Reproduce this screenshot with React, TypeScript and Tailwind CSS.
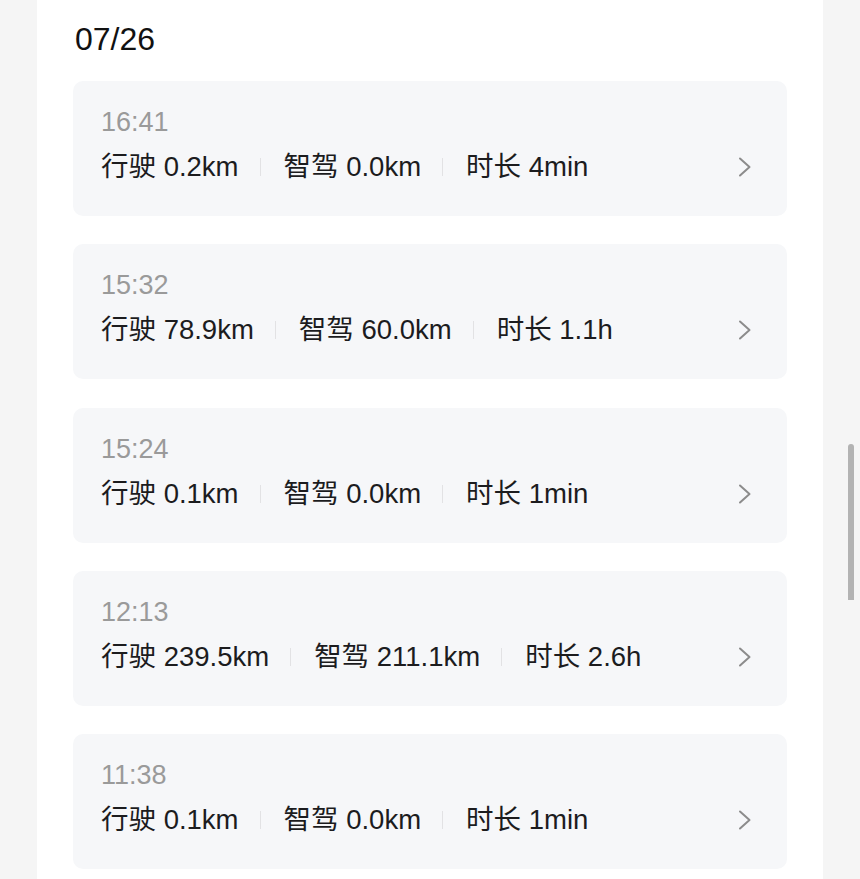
const trips = [
  { time: "16:41", drive: "0.2km", smart: "0.0km", duration: "4min" },
  { time: "15:32", drive: "78.9km", smart: "60.0km", duration: "1.1h" },
  { time: "15:24", drive: "0.1km", smart: "0.0km", duration: "1min" },
  { time: "12:13", drive: "239.5km", smart: "211.1km", duration: "2.6h" },
  { time: "11:38", drive: "0.1km", smart: "0.0km", duration: "1min" },
];

const font = { fontFamily: '"Liberation Sans", "Noto Sans CJK SC", sans-serif' };

const Divider = () => <div className="ml-[21px] mr-[23px] h-[18px] w-px bg-[#e2e2e4]" />;

const Chevron = () => (
  <svg width="14" height="20" viewBox="0 0 14 20" fill="none">
    <polyline points="2,1.5 11.5,10 2,18.5" stroke="#8c8c8c" strokeWidth="2" strokeLinecap="round" strokeLinejoin="round" />
  </svg>
);

type Trip = (typeof trips)[number];

const TripCard = ({ time, drive, smart, duration }: Trip) => {
  return (
    <div className="flex h-[135px] flex-col rounded-[10px] bg-[#f6f7f9] pl-[28px] pr-[35px] pt-[25px]">
      <div className="text-[27px] leading-[32px] text-[#9a9a9a]">{time}</div>
      <div className="mt-[11px] flex h-[36px] items-center text-[27.5px] leading-[36px] text-[#1c1c1e]">
        <span>行驶 {drive}</span>
        <Divider />
        <span>智驾 {smart}</span>
        <Divider />
        <span>时长 {duration}</span>
        <div className="ml-auto flex items-center">
          <Chevron />
        </div>
      </div>
    </div>
  );
};

export default function App() {
  return (
    <div className="flex h-[879px] w-[860px] overflow-hidden bg-[#f5f5f5]" style={font}>
      <div className="ml-[37px] flex w-[786px] flex-col bg-white px-[36px]">
        <div className="pl-[2px] pt-[19px] text-[32px] leading-[40px] text-[#111]">07/26</div>
        <div className="mt-[22px] flex flex-col gap-[28.25px]">
          {trips.map((t) => (
            <TripCard key={t.time} {...t} />
          ))}
        </div>
      </div>
      <div className="flex flex-1 flex-col pt-[444px]">
        <div className="ml-[25px] h-[156px] w-[6px] rounded-t-[3px] bg-[#b3b3b3]" />
      </div>
    </div>
  );
}
